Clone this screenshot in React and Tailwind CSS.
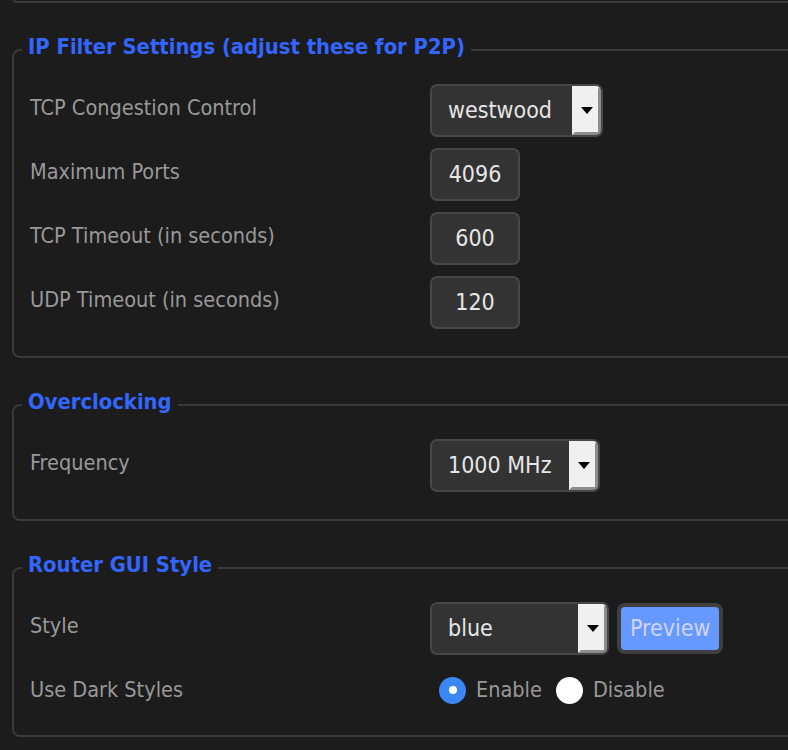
const Arrow = () => (
  <div className="w-[29px] h-full shrink-0 bg-[#f0f0f0] border-[3px] border-t-[#f0f0f0] border-l-[#f0f0f0] border-r-[#8c8c8c] border-b-[#8c8c8c] rounded-tr-[4px] rounded-br-[3px] flex items-center justify-center">
    <svg width="12" height="7" viewBox="0 0 12 7">
      <polygon points="0,0 12,0 6,7" fill="#000" />
    </svg>
  </div>
);

const Select = ({ value, width }) => (
  <div
    className={`h-[53px] flex items-stretch bg-[#333] border-2 border-[#474747] rounded-[7px] overflow-hidden ${width}`}
  >
    <div className="flex-1 flex items-center pl-[16px] text-[23px] text-[#e6e6e6]">{value}</div>
    <Arrow />
  </div>
);

const Input = ({ value }) => (
  <div className="w-[90px] h-[53px] flex items-center justify-center bg-[#333] border-2 border-[#474747] rounded-[7px] text-[23px] text-[#e6e6e6]">
    {value}
  </div>
);

const Row = ({ label, children, height = 'h-[53px]' }) => (
  <div className={`flex items-start mb-[11px] ${height}`}>
    <div className="w-[400px] shrink-0 pt-[11px] leading-[25px] text-[21.5px] text-[#999]">{label}</div>
    <div className="flex items-start gap-[8px]">{children}</div>
  </div>
);

const Section = ({ title, children }) => (
  <fieldset className="mt-[31px] ml-[12px] w-[800px] border-2 border-[#3a3a3a] rounded-[8px] pl-[16px] pr-0 pt-[18px] pb-[16px]">
    <legend className="ml-[-8px] px-[6px] pb-[6px] leading-[26px] text-[21.8px] font-bold text-[#3366ff]">
      {title}
    </legend>
    {children}
  </fieldset>
);

const Radio = ({ checked, label }) => (
  <div className="flex items-center">
    {checked ? (
      <div className="w-[27px] h-[27px] rounded-full bg-[#3b87f6] flex items-center justify-center">
        <div className="w-[8px] h-[8px] rounded-full bg-white" />
      </div>
    ) : (
      <div className="w-[27px] h-[27px] rounded-full bg-white" />
    )}
    <span className="ml-[10px] text-[21.5px] text-[#999]">{label}</span>
  </div>
);

export default function App() {
  return (
    <div className="min-h-screen w-[788px] overflow-hidden bg-[#1c1c1c] font-['DejaVu_Sans_Condensed','DejaVu_Sans',sans-serif]">
      <div className="h-[3px] ml-[13px] w-[800px] border-l-2 border-b-2 border-[#3a3a3a] rounded-bl-[6px]" />

      <Section title="IP Filter Settings (adjust these for P2P)">
        <Row label="TCP Congestion Control">
          <Select value="westwood" width="w-[173px]" />
        </Row>
        <Row label="Maximum Ports">
          <Input value="4096" />
        </Row>
        <Row label="TCP Timeout (in seconds)">
          <Input value="600" />
        </Row>
        <Row label="UDP Timeout (in seconds)">
          <Input value="120" />
        </Row>
      </Section>

      <Section title="Overclocking">
        <Row label="Frequency">
          <Select value="1000 MHz" width="w-[170px]" />
        </Row>
      </Section>

      <Section title="Router GUI Style">
        <Row label="Style">
          <Select value="blue" width="w-[179px]" />
          <button className="mt-[1px] h-[51px] px-[4px] py-[4px] bg-[#3f3f3f] rounded-[8px]">
            <div className="h-full flex items-center px-[9px] bg-[#6699ff] rounded-[4px] text-[23px] text-[#d0d4ff]">
              Preview
            </div>
          </button>
        </Row>
        <Row label="Use Dark Styles" height="h-[42px]">
          <div className="flex items-center gap-[14px] pl-[9px] pt-[8px]">
            <Radio checked label="Enable" />
            <Radio label="Disable" />
          </div>
        </Row>
      </Section>
    </div>
  );
}
